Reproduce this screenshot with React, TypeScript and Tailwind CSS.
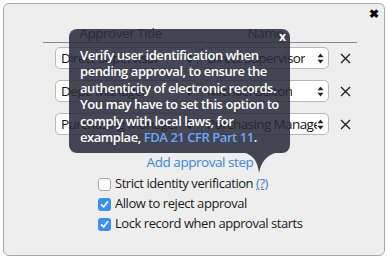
import React from "react";

function Arrows() {
  return (
    <svg width="7" height="11" viewBox="0 0 7 11" className="shrink-0">
      <path d="M3.5 0.5 L6.5 4.3 L0.5 4.3 Z" fill="#222" />
      <path d="M3.5 10.5 L6.5 6.7 L0.5 6.7 Z" fill="#222" />
    </svg>
  );
}

function Select({ value, w }: { value: string; w: string }) {
  return (
    <div
      className={`${w} flex h-[22px] items-center justify-between overflow-hidden rounded-[5px] border border-[#b9b9b9] bg-white pl-[5px] pr-[4px] text-[13.5px] tracking-[-0.6px] text-[#111]`}
    >
      <span className="overflow-hidden whitespace-nowrap">{value}</span>
      <Arrows />
    </div>
  );
}

function RowX() {
  return (
    <svg width="11" height="11" viewBox="0 0 11 11" className="ml-[11px]">
      <path d="M1 1 L10 10 M10 1 L1 10" stroke="#222" strokeWidth="1.4" />
    </svg>
  );
}

function Check({ checked, children }: { checked: boolean; children: React.ReactNode }) {
  return (
    <div className="flex h-[20px] items-center gap-[4px]">
      {checked ? (
        <div className="flex h-[13px] w-[13px] items-center justify-center rounded-[3px] bg-[#3b8ff2]">
          <svg width="9" height="9" viewBox="0 0 9 9">
            <path d="M1.5 4.8 L3.6 7 L7.6 1.8" stroke="white" strokeWidth="1.7" fill="none" strokeLinecap="round" strokeLinejoin="round" />
          </svg>
        </div>
      ) : (
        <div className="h-[13px] w-[13px] rounded-[3px] border border-[#a8a8a8] bg-white" />
      )}
      <span className="text-[13px] tracking-[-0.45px] text-[#1a1a1a]">{children}</span>
    </div>
  );
}

export default function App() {
  const rows = [
    ["Direct Supervisor", "Direct Supervisor"],
    ["Dept. Manager", "Michael Bolton"],
    ["Purchasing Manager", "Purchasing Manager"],
  ];
  return (
    <div className="h-[259px] w-[387px] bg-white p-[3px] font-['Open_Sans',sans-serif]">
      <div className="relative h-[253px] w-[382px] rounded-[6px] border border-[#a9a9a9] bg-[#eeeeee]">
        <div className="absolute right-[5px] top-[4px] text-[12px] font-bold leading-none text-black">✖</div>
        <div className="ml-[39px] mt-[20px] w-[314px]">
          <div className="flex h-[19px] items-center border-b border-[#8a8a8a] text-[13.5px] tracking-[-0.45px] text-[#333]">
            <div className="w-[155px] text-center">Approver Title</div>
            <div className="w-[135px] text-center">Name</div>
          </div>
          <div className="mt-[4px] flex flex-col gap-[11px]">
            {rows.map((r, i) => (
              <div key={i} className="flex h-[22px] items-center">
                <div className="ml-[12px]">
                  <Select value={r[0]} w="w-[143px]" />
                </div>
                <div className="ml-[3px]">
                  <Select value={r[1]} w="w-[128px]" />
                </div>
                <RowX />
              </div>
            ))}
          </div>
          <div className="mt-[18px] text-center text-[13.5px] leading-[18px] tracking-[-0.45px] text-[#3a84d6]">Add approval step</div>
        </div>
        <div className="ml-[94px] mt-[3px] flex flex-col">
          <Check checked={false}>
            Strict identity verification <span className="text-[#3a84d6] underline">(?)</span>
          </Check>
          <Check checked={true}>Allow to reject approval</Check>
          <Check checked={true}>Lock record when approval starts</Check>
        </div>

        <div className="absolute left-[65px] top-[25px] h-[124px] w-[221px] rounded-[8px] bg-[#282938]/[0.86] pl-[11px] pt-[18px]">
          <div className="absolute right-[4px] top-[2px] text-[12px] font-bold leading-none text-white">x</div>
          <div className="whitespace-nowrap text-[13px] font-semibold leading-[16.4px] tracking-[-0.45px] text-white">
            Verify user identification when
            <br />
            pending approval, to ensure the
            <br />
            authenticity of electronic records.
            <br />
            You may have to set this option to
            <br />
            comply with local laws, for
            <br />
            examplae, <span className="text-[#6ea8f7]">FDA 21 CFR Part 11</span>.
          </div>
          <svg className="absolute left-[170px] top-[124px]" width="40" height="22" viewBox="0 0 40 22">
            <path d="M6 0 Q18 3 20 20 Q23 4 36 0 Z" fill="#282938" fillOpacity="0.86" />
          </svg>
        </div>
      </div>
    </div>
  );
}
